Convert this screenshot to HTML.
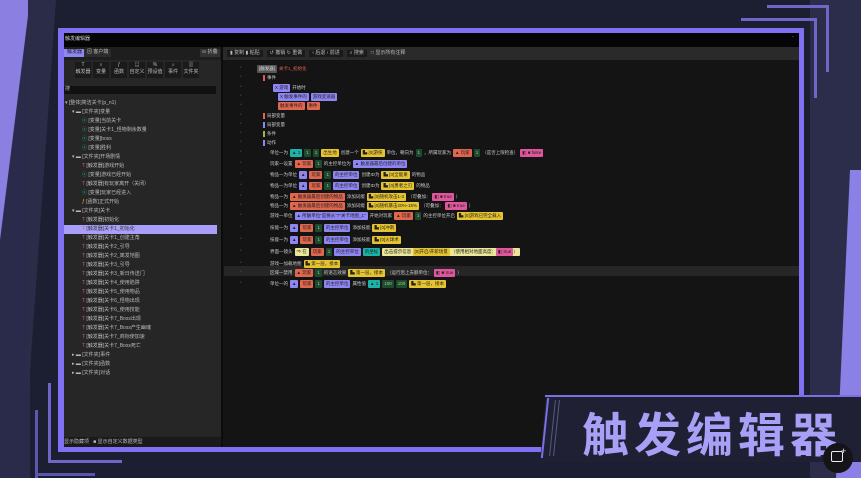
<!DOCTYPE html>
<html><head><meta charset="utf-8"><style>
*{margin:0;padding:0;box-sizing:border-box}
body{width:861px;height:478px;overflow:hidden;background:#1c1e31;font-family:"Liberation Sans","Noto Sans CJK SC",sans-serif;position:relative;color:#ccc}
.a{position:absolute}
.t{font-size:5px;line-height:7px;white-space:nowrap;color:#bbb}
.row{position:absolute;display:flex;align-items:center;gap:2px;font-size:4.5px;white-space:nowrap;color:#ccc;height:8px}
.c{display:inline-block;height:8px;line-height:8px;padding:0 2px;border-radius:1px;font-size:4.5px;color:#222}
.te{background:#1ab3a6}.gr{background:#1e4a2e;color:#9c9}.ye{background:#e6c430}.or{background:#e0664e}.pu{background:#8e86f2}.pk{background:#e0569c}.gy{background:#555;color:#ddd}.ly{background:#eae79a}
</style></head><body>
<div class="a" style="left:0;top:0;width:30px;height:478px;background:#2a2b4a"></div>
<div class="a" style="left:0;top:0;width:0;height:0;border-top:240px solid #8b80e2;border-right:30px solid transparent"></div>
<div class="a" style="left:28px;top:0;width:0;height:0;border-top:400px solid #2a2c48;border-right:28px solid transparent"></div>
<div class="a" style="left:810px;top:0;width:51px;height:478px;background:#2c2d4a"></div>
<div class="a" style="left:836px;top:170px;width:0;height:0;border-bottom:308px solid #8a80e6;border-left:14px solid transparent"></div>
<div class="a" style="left:850px;top:170px;width:11px;height:308px;background:#8a80e6"></div>
<!-- top-right brackets -->
<div class="a" style="left:767px;top:5px;width:62px;height:3px;background:#6f66c8"></div>
<div class="a" style="left:826px;top:5px;width:3px;height:67px;background:#6f66c8"></div>
<div class="a" style="left:741px;top:18px;width:76px;height:3px;background:#6f66c8"></div>
<div class="a" style="left:814px;top:18px;width:3px;height:80px;background:#6f66c8"></div>
<!-- bottom-left brackets -->
<div class="a" style="left:48px;top:383px;width:3px;height:80px;background:#6f66c8"></div>
<div class="a" style="left:48px;top:460px;width:74px;height:3px;background:#6f66c8"></div>
<div class="a" style="left:35px;top:410px;width:3px;height:68px;background:#5d56b0"></div>
<div class="a" style="left:35px;top:473px;width:60px;height:3px;background:#5d56b0"></div>
<!-- window frame -->
<div class="a" style="left:58px;top:28px;width:746px;height:424px;background:#7e72f2"></div>
<div class="a" style="left:64px;top:33px;width:735px;height:414px;background:#141414"></div>
<div class="a" style="left:64px;top:33px;width:735px;height:14px;background:#050505"></div>
<div class="a t" style="left:65px;top:36px;color:#ccc">触发编辑器</div>
<div class="a t" style="left:792px;top:34px;color:#aaa">-</div>
<div class="a" style="left:64px;top:47px;width:157px;height:400px;background:#262626"></div>
<div class="a" style="left:64px;top:47px;width:157px;height:13px;background:#1e1e1e"></div>
<div class="a t" style="left:64px;top:49px;background:#8e86f2;color:#222;padding:0 3px;height:8px">触发器</div>
<div class="a t" style="left:84px;top:49px;padding:0 3px;height:8px;background:#2c2c2c">⊠ 客户端</div>
<div class="a t" style="left:200px;top:49px;padding:0 2px;height:8px;background:#333">⛀ 折叠</div>
<div class="a" style="left:75px;top:62px;width:126px;height:16px;display:flex;gap:2px">
 <div class="t" style="width:16px;height:16px;background:#1a1a1a;text-align:center;line-height:7px">T<br>触发器</div>
 <div class="t" style="width:16px;height:16px;background:#1a1a1a;text-align:center;line-height:7px">⌕<br>变量</div>
 <div class="t" style="width:16px;height:16px;background:#1a1a1a;text-align:center;line-height:7px">ƒ<br>函数</div>
 <div class="t" style="width:16px;height:16px;background:#1a1a1a;text-align:center;line-height:7px">▤<br>自定义</div>
 <div class="t" style="width:16px;height:16px;background:#1a1a1a;text-align:center;line-height:7px">%<br>预设值</div>
 <div class="t" style="width:16px;height:16px;background:#1a1a1a;text-align:center;line-height:7px">☼<br>事件</div>
 <div class="t" style="width:16px;height:16px;background:#1a1a1a;text-align:center;line-height:7px">▥<br>文件夹</div>
</div>
<div class="a" style="left:64px;top:86px;width:152px;height:8px;background:#111"></div>
<div class="a t" style="left:65px;top:86px">搜</div>
<div class="a" style="left:64px;top:225px;width:153px;height:9px;background:#a99ffb"></div>
<div class="a" style="left:64px;top:437px;width:157px;height:10px;background:#1a1a1a"></div>
<div class="a t" style="left:64px;top:439px">显示隐藏项 &nbsp; ■ 显示自定义数据类型</div>
<div id="tree"></div>
<div class="a" style="left:223px;top:47px;width:576px;height:13px;background:#2a2a2a"></div>
<div class="a t" style="left:227px;top:50px;display:flex;gap:4px">
<span style="background:#1a1a1a;padding:0 3px">▮ 复制 ▮ 粘贴</span><span style="background:#1a1a1a;padding:0 3px">↺ 撤销 ↻ 重做</span><span style="background:#1a1a1a;padding:0 3px">‹ 后退 › 前进</span><span style="background:#1a1a1a;padding:0 3px">⌕ 搜索</span><span>□ 显示所有注释</span></div>
<div class="a" style="left:221px;top:47px;width:2px;height:400px;background:#0c0c0c"></div>
<div class="a" style="left:224px;top:266px;width:575px;height:10px;background:#262626"></div>
<div id="ed"></div>
<!-- banner -->
<div class="a" style="left:540px;top:396px;width:321px;height:66px;background:#1f2034;clip-path:polygon(6px 0,100% 0,100% 100%,0 100%)"></div>
<div class="a" style="left:545px;top:395px;width:316px;height:2px;background:#7a70e0"></div>
<div class="a" style="left:544px;top:398px;width:2px;height:60px;background:#7a70e0;transform:skewX(-6deg)"></div>
<div class="a" style="left:552px;top:400px;width:1px;height:56px;background:#555a80;transform:skewX(-6deg)"></div>
<div class="a" style="left:556px;top:400px;width:1px;height:56px;background:#555a80;transform:skewX(-6deg)"></div>
<div class="a" style="left:582px;top:399px;font-family:'Noto Sans CJK SC',sans-serif;font-weight:700;font-size:47px;line-height:66px;color:#a89ff6;letter-spacing:5px;white-space:nowrap">触发编辑器</div>
<div class="a" style="left:823px;top:443px;width:30px;height:30px;border-radius:50%;background:#151519"></div>
<div class="a" style="left:831px;top:451px;width:12px;height:11px;border:1.5px solid #eee;border-radius:2px"></div>
<div class="a" style="left:841px;top:447px;color:#eee;font-size:9px;line-height:9px">+</div>
<script>
var tr=[[0,'▾ [整体]简洁关卡(p_n1)'],[1,'▾ ▬ [文件夹]变量'],[2,'ⓧ [变量]当前关卡',1],[2,'ⓧ [变量]关卡1_怪物剩余数量',1],[2,'ⓧ [变量]boss',1],[2,'ⓧ [变量]胜利',1],[1,'▾ ▬ [文件夹]开场剧情'],[2,'T [触发器]游戏开始',2],[2,'ⓧ [变量]游戏已经开始',1],[2,'T [触发器]有玩家离开（关闭）',2],[2,'ⓧ [变量]玩家已经进入',1],[2,'ƒ [函数]正式开始',3],[1,'▾ ▬ [文件夹]关卡'],[2,'T [触发器]初始化',2],[2,'T [触发器]关卡1_初始化',2],[2,'T [触发器]关卡1_创建主角',2],[2,'T [触发器]关卡2_引导',2],[2,'T [触发器]关卡2_离发地图',2],[2,'T [触发器]关卡3_引导',2],[2,'T [触发器]关卡3_新日传送门',2],[2,'T [触发器]关卡4_使用陷阱',2],[2,'T [触发器]关卡5_使用物品',2],[2,'T [触发器]关卡6_怪物出现',2],[2,'T [触发器]关卡6_使用技能',2],[2,'T [触发器]关卡7_Boss出现',2],[2,'T [触发器]关卡7_Boss产生幽魂',2],[2,'T [触发器]关卡7_商标使加速',2],[2,'T [触发器]关卡7_Boss死亡',2],[1,'▸ ▬ [文件夹]事件'],[1,'▸ ▬ [文件夹]函数'],[1,'▸ ▬ [文件夹]对话']];
var col=['#bbb','#1fb3a0','#e0566a','#e6c430'];var h='';
tr.forEach(function(r,i){var s=r[1];var ic='';if(r[2]){ic='<span style="color:'+col[r[2]]+'">'+s[0]+'</span>';s=s.slice(1)}h+='<div class="a t" style="left:'+(65+r[0]*7+(r[0]==2?3:0))+'px;top:'+(100+9*i)+'px;'+(i==14?'color:#333':'')+'">'+ic+s+'</div>'});
document.getElementById('tree').innerHTML=h;
function C(c,t){return '<span class="c '+c+'">'+t+'</span>'}
var ed=[[66,257,C('gy','[触发器]')+'<span style="color:#e0664e">关卡1_初始化</span>'],[75,263,'<span style="border-left:2px solid #e0566a;padding-left:2px">事件</span>'],[85,273,C('pu','X 游戏')+'开始时'],[94,278,C('pu','X 触发事件的')+C('pu','游戏变速器')],[103,278,C('or','触发事件的')+C('or','事件')],[113,263,'<span style="border-left:2px solid #e0664e;padding-left:2px">局部变量</span>'],[122,263,'<span style="border-left:2px solid #8e86f2;padding-left:2px">局部变量</span>'],[131,263,'<span style="border-left:2px solid #9ab84a;padding-left:2px">条件</span>'],[140,263,'<span style="border-left:2px solid #8e86f2;padding-left:2px">动作</span>'],
[150,270,'单位一为'+C('te','▲ 1')+C('gr','1')+C('gr','1')+C('ye','出生地')+'创建一个'+C('ye','▙ [0]游侠')+'单位，朝向为'+C('gr','1')+'，所属玩家为'+C('or','▲ 玩家')+C('gr','1')+'（是否上限检查）'+C('pk','◧ ■ false')],
[161,270,'玩家一设置'+C('or','▲ 玩家')+C('gr','1')+'的主控单位为'+C('pu','▲ 触发器最后创建的单位')],
[172,270,'物品一为单位'+C('pu','▲')+C('or','玩家')+C('gr','1')+C('pu','的主控单位')+'创建ID为'+C('ye','▙ [0]全能果')+'的物品'],
[183,270,'物品一为单位'+C('pu','▲')+C('or','玩家')+C('gr','1')+C('pu','的主控单位')+'创建ID为'+C('ye','▙ [0]勇者之刃')+'的物品'],
[194,270,'物品一为'+C('or','▲ 触发器最后创建的物品')+'添加词缀'+C('ye','▙ [0]随机攻击1-3')+'（可叠加：'+C('pk','◧ ■ true')+'）'],
[203,270,'物品一为'+C('or','▲ 触发器最后创建的物品')+'添加词缀'+C('ye','▙ [0]随机暴击20%-15%')+'（可叠加：'+C('pk','◧ ■ true')+'）'],
[213,270,'游戏一单位'+C('pu','▲ 所触单位"是要从"7"关卡地图_1"')+'开始对玩家'+C('or','▲ 玩家')+C('gr','1')+'的主控单位开启'+C('ye','▙ [0]游戏已完全载入')],
[225,270,'技能一为'+C('pu','▲')+C('or','玩家')+C('gr','1')+C('pu','的主控单位')+'添加技能'+C('ye','▙ [0]冲刺')],
[237,270,'技能一为'+C('pu','▲')+C('or','玩家')+C('gr','1')+C('pu','的主控单位')+'添加技能'+C('ye','▙ [0]火球术')],
[249,270,'界面一镜头'+C('ly','⇒ 在')+C('or','玩家')+C('gr','1')+C('pu','的主控单位')+C('te','的坐标')+'<span class="c ly">出击提示信息 '+C('ye','[0]开启/开新场景')+' （使用相对地面高度：'+C('pk','◧ true')+'）</span>'],
[261,270,'游戏一加载地图'+C('ye','▙ 第一层，接本')],
[270,270,'区域一禁用'+C('or','▲ 玩家')+C('gr','1')+'的语言效果'+C('ye','▙ 第一层，接本')+'（运行后上去额单位：'+C('pk','◧ ■ true')+'）'],
[281,270,'单位一的'+C('pu','▲')+C('or','玩家')+C('gr','1')+C('pu','的主控单位')+'属性值'+C('te','▲ 1')+C('gr','100')+C('gr','100')+C('ye','▙ 第一层，接本')]];
h='';ed.forEach(function(r){h+='<div class="row" style="left:'+r[1]+'px;top:'+(r[0]-1)+'px">'+r[2]+'</div>';h+='<div class="a t" style="left:240px;top:'+(r[0]-1)+'px;color:#444">•</div>'});
document.getElementById('ed').innerHTML=h;
</script>
</body></html>
